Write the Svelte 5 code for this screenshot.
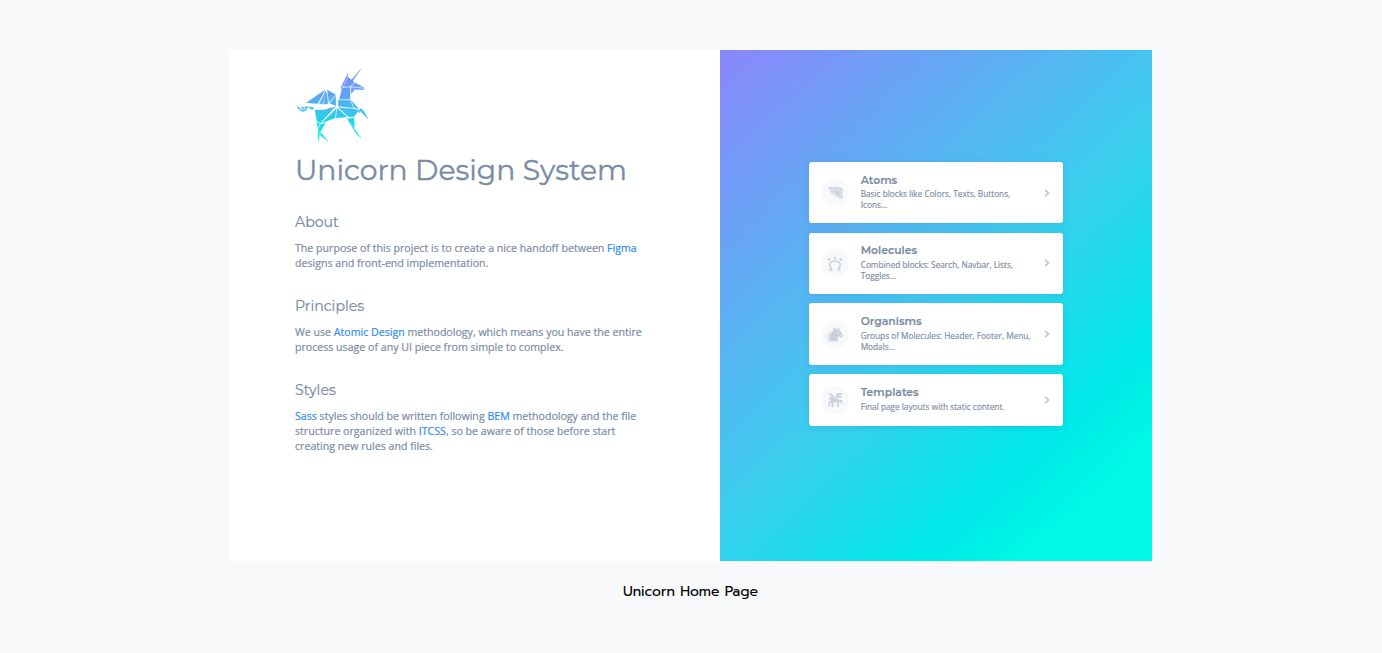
<script>
  const cards = [
    { icon: 'wing', title: 'Atoms', text: 'Basic blocks like Colors, Texts, Buttons, Icons...' },
    { icon: 'shoe', title: 'Molecules', text: 'Combined blocks: Search, Navbar, Lists, Toggles...' },
    { icon: 'head', title: 'Organisms', text: 'Groups of Molecules: Header, Footer, Menu, Modals...' },
    { icon: 'pegasus', title: 'Templates', text: 'Final page layouts with static content.' }
  ];
</script>

<main class="page">
  <div class="frame">
    <section class="intro">
      <svg class="logo" viewBox="30 18 222 234" width="74" height="78">
        <defs>
          <linearGradient id="uni" gradientUnits="userSpaceOnUse" x1="0" y1="25" x2="0" y2="248">
            <stop offset="0" stop-color="#8187f9" />
            <stop offset="0.35" stop-color="#60a2f3" />
            <stop offset="0.55" stop-color="#42c0ec" />
            <stop offset="0.8" stop-color="#12dfe7" />
            <stop offset="1" stop-color="#00f5e2" />
          </linearGradient>
        </defs>
        <g fill="url(#uni)" stroke="url(#uni)" stroke-width="1" stroke-linejoin="round">
          <path d="M228 26L199 60L202 64Z" />
          <path d="M189 40L168 82L168 88L187 55Z" />
          <path d="M190 52L208 67L196 79L175 80Z" />
          <path d="M210 68L237 83L199 79Z" />
          <path d="M198 82L238 86L236 89L204 88Z" />
          <path d="M172 84L195 82L195 118L163 118Z" />
          <path d="M198 84L208 90L199 101Z" />
          <path d="M120 90L64 128L98 131Z" />
          <path d="M122 93L103 131L112 132L123 102Z" />
          <path d="M127 90L152 104L132 127Z" />
          <path d="M125 97L129 131L115 133Z" />
          <path d="M152 108L153 137L134 130Z" />
          <path d="M159 121L195 121L205 143L160 139Z" />
          <path d="M198 121L221 146L208 143Z" />
          <path d="M161 143L203 146L222 150L207 170L190 170Z" />
          <path d="M157 145L186 171L153 174Z" />
          <path d="M131 145L153 141L116 162L122 149Z" />
          <path d="M90 150L143 149L105 190L95 181Z" />
          <path d="M154 146L150 174L109 190Z" />
          <path d="M95 185L104 193L99 206Z" />
          <path d="M107 193L121 190L104 218L100 209Z" />
          <path d="M99 211L104 222L100 247Z" />
          <path d="M107 217L129 244L106 226Z" />
          <path d="M187 176L207 174L208 204Z" />
          <path d="M189 180L209 208L229 235L212 218Z" />
          <path d="M228 145L233 151L222 158L219 155Z" />
          <path d="M234 149L249 176L229 157Z" />
          <path d="M37 137L42 143L48 148L39 147Z" />
          <path d="M48 143L58 140L54 151Z" />
          <path d="M61 140L71 140L58 152Z" />
          <path d="M74 140L86 143L82 149L73 145Z" />
          <path d="M42 149L53 155L66 150L52 151Z" />
        </g>
      </svg>
      <h1>Unicorn Design System</h1>
      <h2 class="first">About</h2>
      <p>The purpose of this project is to create a nice handoff between <a>Figma</a><br />designs and front-end implementation.</p>
      <h2>Principles</h2>
      <p>We use <a>Atomic Design</a> methodology, which means you have the entire<br />process usage of any UI piece from simple to complex.</p>
      <h2>Styles</h2>
      <p><a>Sass</a> styles should be written following <a>BEM</a> methodology and the file<br />structure organized with <a>ITCSS</a>, so be aware of those before start<br />creating new rules and files.</p>
    </section>

    <section class="menu">
      {#each cards as card}
        <div class="card" class:short={card.icon === 'pegasus'}>
          <div class="badge">
            <svg viewBox="0 0 48 48" width="16" height="16">
              {#if card.icon === 'wing'}
                <path fill="#dbe0e8" d="M4 7H38Q46 7 46 15V41H43Q33 40 30 35Q24 35 21 29Q10 26 9 17Q5 14 4 7Z" />
                <path fill="#c9d0da" d="M3 7H38Q46 7 46 15V41H44V17Q43 10 36 10H5Z" />
                <path fill="#c6cdd8" d="M23 18H33Q37 18 37 22V35Q32 33 31 28Q25 27 23 18Z" />
              {:else if card.icon === 'shoe'}
                <path fill="none" stroke="#c9d0da" stroke-width="4.5" d="M7 45H14V41Q7 35 8 29Q11 18 24 18Q37 18 40 29Q41 35 34 41V45H41" />
                <path fill="#cbd1dc" d="M24 0L28 13H20ZM5 8L12 12L8 18L1 15ZM43 8L36 12L40 18L47 15Z" />
              {:else if card.icon === 'head'}
                <path fill="#d9dee6" d="M2 46V28Q5 18 14 17V46Z" />
                <path fill="#cbd1db" d="M9 46Q9 20 19 13L20 3L27 9L32 10L39 2L37 13L44 20L48 29L42 36L34 31Q30 33 33 46Z" />
                <path fill="none" stroke="#f8f9fb" stroke-width="2" d="M6 46V29Q8 22 12 20M31 19L36 22M39 29L43 27" />
              {:else}
                <path fill="#cbd1db" d="M3 3L16 6L22 18L25 9L34 3H46L44 8L32 11L45 13L42 18L33 17L35 25L45 24L46 33L42 38V30L36 31L35 45H31L30 30L19 31V46H14L13 31L8 35L7 44H3L5 30L12 25L4 20L13 19L6 14L13 13Z" />
                <path fill="none" stroke="#f8f9fb" stroke-width="1.6" d="M9 9L19 20M27 10L26 23M31 13L30 21" />
              {/if}
            </svg>
          </div>
          <div class="copy">
            <h3>{card.title}</h3>
            <div class="desc">{card.text}</div>
          </div>
          <svg class="chev" viewBox="0 0 6 8" width="6" height="8">
            <path d="M1.1 0.9L4.5 4L1.1 7.1" fill="none" stroke="#c3cbdf" stroke-width="1.9" />
          </svg>
        </div>
      {/each}
    </section>
  </div>
  <div class="caption">Unicorn Home Page</div>
</main>

<style>
  :global(body) {
    margin: 0;
    background: #f7f9fb;
  }
  .page {
    box-sizing: border-box;
    height: 653px;
    padding: 50px 1px 0 0;
    display: flex;
    flex-direction: column;
    align-items: center;
    overflow: hidden;
    font-family: 'Open Sans', sans-serif;
    color: #7a8ca3;
  }
  .frame {
    display: flex;
    width: 923px;
    height: 511px;
    background: #fff;
  }
  .intro {
    box-sizing: border-box;
    width: 490.6px;
    flex: none;
    padding: 16px 0 0 66px;
    white-space: nowrap;
    -webkit-text-stroke: 0.2px;
  }
  .logo {
    display: block;
  }
  h1,
  h2,
  h3 {
    font-family: Montserrat, Inter, sans-serif;
    margin: 0;
    font-weight: 400;
  }
  h1 {
    font-size: 28.25px;
    line-height: 40px;
    margin-top: 6px;
    -webkit-text-stroke: 0.4px;
  }
  h2 {
    font-size: 14.15px;
    line-height: 20px;
    margin-top: 25.2px;
  }
  h2.first {
    margin-top: 22.4px;
  }
  p {
    margin: 8.6px 0 0;
    font-size: 10.61px;
    line-height: 15.1px;
  }
  a {
    color: #2f8df5;
  }
  .menu {
    flex: 1;
    display: flex;
    flex-direction: column;
    align-items: center;
    gap: 9.4px;
    box-sizing: border-box;
    padding: 112px 0 0 1px;
    background: linear-gradient(137deg, #8789fb 2%, #66a6f4 23.5%, #3bcdee 51.5%, #00e8e8 75.5%, #00fae5 88%);
  }
  .card {
    box-sizing: border-box;
    display: flex;
    align-items: center;
    width: 254.4px;
    height: 61.3px;
    padding: 0 13.4px 0 12px;
    background: #fff;
    border-radius: 3px;
    box-shadow: 0 1px 6px rgba(60, 110, 180, 0.2);
  }
  .card.short {
    height: 51.5px;
  }
  .badge {
    display: flex;
    align-items: center;
    justify-content: center;
    width: 28px;
    height: 28px;
    border-radius: 50%;
    background: #f8f9fb;
  }
  .copy {
    width: 174px;
    margin-left: 11.6px;
    padding-bottom: 2.6px;
    -webkit-text-stroke: 0.15px;
  }
  h3 {
    font-size: 10.85px;
    line-height: 14px;
    font-weight: 600;
  }
  .desc {
    font-size: 8.25px;
    line-height: 11px;
    margin-top: 1.6px;
  }
  .chev {
    margin-left: auto;
  }
  .caption {
    margin-top: 20px;
    font-family: Prompt, Inter, sans-serif;
    font-size: 14px;
    line-height: 21px;
    color: #000;
  }
</style>
